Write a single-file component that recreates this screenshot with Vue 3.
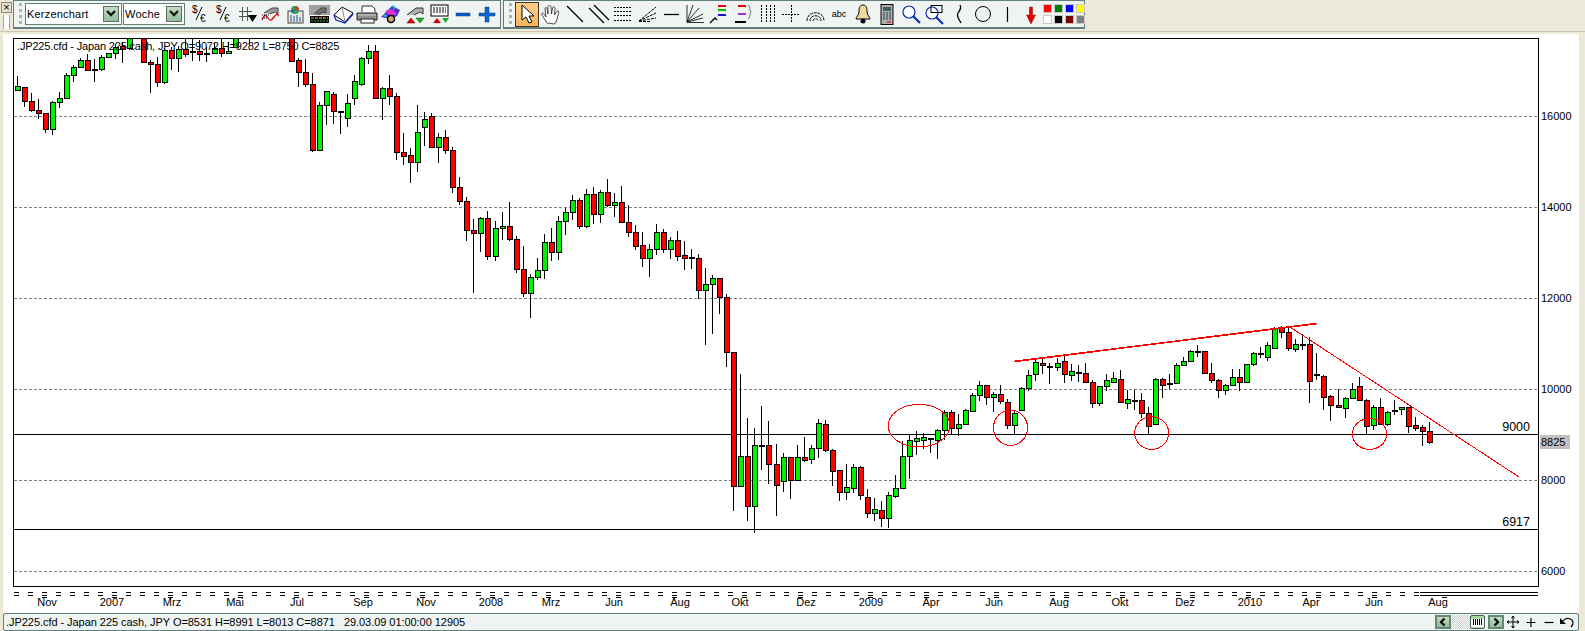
<script setup>
// --- KERZEN ---
// [Docht oben, Körper oben, Körper unten, Docht unten, Farbe] in Pixeln; null = außerhalb des Charts
const RAW = [
  [76,86,90,90,'g'],[87,87,101,107,'r'],[93,101,110,112,'r'],[99,110,113,119,'r'],[113,113,129,133,'r'],
  [101,102,129,135,'g'],[92,98,102,108,'g'],[73,75,98,99,'g'],[65,67,75,82,'g'],[58,60,67,68,'g'],
  [54,60,70,71,'r'],[59,69,69,82,'d'],[55,57,69,71,'g'],[53,53,57,58,'g'],[44,47,53,59,'g'],
  [42,46,49,63,'r'],[30,30,48,50,'g'],null,[30,30,62,63,'r'],[60,62,64,93,'r'],
  [57,64,82,87,'r'],[48,50,82,84,'g'],[47,50,58,70,'r'],[46,49,58,72,'g'],[39,49,54,57,'r'],
  [39,51,51,61,'d'],[40,51,54,61,'r'],[47,53,53,62,'d'],[43,48,53,54,'g'],[39,48,53,57,'r'],
  [42,51,53,54,'g'],[30,30,47,48,'g'],null,[30,30,30,44,'g'],null,
  null,null,null,null,[30,30,61,62,'r'],
  [58,60,72,87,'r'],[59,72,84,87,'r'],[73,84,150,152,'r'],[102,105,150,151,'g'],[91,91,105,125,'g'],
  [92,94,111,124,'r'],[111,111,111,134,'d'],[94,103,118,127,'g'],[75,81,98,105,'g'],[57,58,84,86,'g'],
  [45,51,58,64,'g'],[45,51,98,98,'r'],[87,88,98,120,'g'],[75,88,96,105,'r'],[93,96,152,160,'r'],
  [133,152,156,165,'r'],[148,155,162,183,'r'],[105,132,162,172,'g'],[112,119,127,146,'g'],[113,116,147,147,'r'],
  [133,137,147,163,'g'],[130,137,150,154,'r'],[147,150,187,193,'r'],[177,187,201,205,'r'],[197,201,230,241,'r'],
  [219,230,233,293,'r'],[217,218,233,252,'g'],[211,218,256,260,'r'],[221,228,256,261,'g'],[212,226,228,240,'g'],
  [202,226,239,241,'r'],[236,239,269,273,'r'],[246,269,293,297,'r'],[274,277,293,318,'g'],[258,270,277,280,'g'],
  [234,242,270,279,'g'],[228,242,252,261,'r'],[216,221,252,260,'g'],[208,212,221,235,'g'],[195,200,212,220,'g'],
  [198,200,226,229,'r'],[189,194,226,228,'g'],[187,194,214,224,'r'],[190,192,214,223,'g'],[179,192,205,207,'r'],
  [193,202,205,217,'g'],[186,202,222,222,'r'],[205,222,232,237,'r'],[225,232,246,250,'r'],[232,245,258,267,'r'],
  [244,249,258,277,'g'],[224,232,249,255,'g'],[229,232,249,253,'r'],[237,240,249,259,'g'],[231,240,256,261,'r'],
  [241,255,258,270,'r'],[249,257,257,269,'d'],[254,258,290,299,'r'],[268,284,290,345,'g'],[275,278,284,334,'g'],
  [278,278,297,314,'r'],[294,297,352,367,'r'],[352,352,486,511,'r'],[374,456,486,486,'g'],[418,456,506,521,'r'],
  [428,445,506,533,'g'],[406,445,445,470,'d'],[421,445,464,484,'r'],[444,464,485,516,'r'],[453,457,481,492,'g'],
  [457,457,480,499,'r'],[445,457,480,481,'g'],[437,457,460,462,'r'],[445,448,459,464,'g'],[419,423,448,458,'g'],
  [420,424,450,452,'r'],[449,450,471,486,'r'],[470,470,492,501,'r'],[464,487,492,500,'g'],[464,467,488,493,'g'],
  [466,467,495,500,'r'],[489,497,513,518,'r'],[498,509,513,521,'g'],[501,510,518,527,'r'],[492,495,518,528,'g'],
  [475,488,496,498,'g'],[441,456,488,488,'g'],[434,440,456,479,'g'],[431,438,441,455,'g'],[433,437,440,449,'g'],
  [438,438,438,453,'d'],[429,430,440,459,'g'],[410,412,430,440,'g'],[410,412,428,434,'r'],[414,424,428,436,'g'],
  [409,410,424,425,'g'],[393,395,411,411,'g'],[381,385,395,401,'g'],[385,385,397,405,'r'],[392,394,397,412,'g'],
  [385,394,401,404,'r'],[399,402,425,429,'r'],[410,413,425,434,'g'],[387,388,410,410,'g'],[370,375,388,391,'g'],
  [359,362,374,381,'g'],[359,363,365,374,'r'],[363,366,366,384,'d'],[358,363,367,371,'g'],[355,361,374,383,'r'],
  [364,371,375,381,'g'],[365,372,372,382,'d'],[363,373,382,382,'r'],[380,382,403,408,'r'],[386,386,403,406,'g'],
  [374,380,386,391,'g'],[372,378,382,383,'g'],[370,379,402,402,'r'],[390,399,403,409,'g'],[390,400,400,410,'d'],
  [393,400,413,418,'r'],[407,413,426,434,'r'],[378,379,424,425,'g'],[378,379,385,398,'r'],[374,383,383,389,'d'],
  [363,365,383,383,'g'],[357,361,365,366,'g'],[350,351,361,361,'g'],[345,351,351,357,'d'],[351,351,373,373,'r'],
  [363,373,380,383,'r'],[379,380,390,398,'r'],[384,385,390,395,'g'],[369,377,385,385,'g'],[369,377,382,391,'r'],
  [364,364,382,383,'g'],[352,353,364,366,'g'],[347,353,354,358,'d'],[342,345,357,361,'g'],[327,328,348,348,'g'],
  [326,327,332,338,'r'],[327,332,348,351,'r'],[339,344,349,352,'g'],[334,344,344,350,'d'],[337,344,381,403,'r'],
  [353,374,374,380,'d'],[375,376,397,410,'r'],[395,396,405,421,'r'],[389,405,407,408,'r'],[397,398,408,418,'g'],
  [383,389,398,398,'g'],[377,386,400,401,'r'],[399,400,426,434,'r'],[405,407,425,430,'g'],[398,407,424,425,'r'],
  [411,412,424,426,'g'],[400,410,410,415,'d'],[407,407,409,415,'g'],[407,407,426,433,'r'],[417,425,428,431,'r'],
  [425,427,431,446,'r'],[422,431,442,444,'r']
];

const FILL = { r: '#ff0000', g: '#00f000', d: '#000000' };

const bars = RAW.flatMap((c, i) => {
  if (!c) return [];
  const [hi, top, bottom, lo, kind] = c;
  return [{
    id: i,
    x: Math.floor(17.3 + 7.025 * i) + 0.5,
    hi, lo, top: top + 0.5,
    h: Math.max(bottom - top, 1),
    fill: FILL[kind]
  }];
});

// --- ACHSEN ---
const PRICES = [
  { label: '16000', y: 116 }, { label: '14000', y: 207 }, { label: '12000', y: 298 },
  { label: '10000', y: 389 }, { label: '8000', y: 480 }, { label: '6000', y: 571 }
];

const MONTHS = [
  ['Nov', 47], ['2007', 112], ['Mrz', 172], ['Mai', 235], ['Jul', 297], ['Sep', 363], ['Nov', 426], ['2008', 491],
  ['Mrz', 551], ['Jun', 614], ['Aug', 680], ['Okt', 740], ['Dez', 806], ['2009', 871], ['Apr', 931], ['Jun', 994],
  ['Aug', 1059], ['Okt', 1120], ['Dez', 1185], ['2010', 1250], ['Apr', 1311], ['Jun', 1374], ['Aug', 1438]
];

// Monatsstrich sitzt auf dem nächsten "="-Raster links vom Label
const tickStart = (x) => 14 + 14 * Math.round((x - 16) / 14);

const SWATCHES = ['#ff0000', '#008000', '#0000ff', '#ffff00', '#ffffff', '#000000', '#800000', '#808080'];
</script>

<template>
  <div class="page">
    <div class="topbar">
      <div class="dock">
        <div class="close">×</div>
        <div class="dock-grip"></div>
      </div>

      <div class="toolbar first">
        <div class="grip"></div>
        <div class="combo wide">
          <span>Kerzenchart</span>
          <div class="drop"><svg width="12" height="8" viewBox="0 0 12 8"><path d="M2 1l4 4 4-4" fill="none" stroke="#101810" stroke-width="2.4" /></svg></div>
        </div>
        <div class="combo narrow">
          <span>Woche</span>
          <div class="drop"><svg width="12" height="8" viewBox="0 0 12 8"><path d="M2 1l4 4 4-4" fill="none" stroke="#101810" stroke-width="2.4" /></svg></div>
        </div>

        <div class="icons">
          <svg class="ic" viewBox="0 0 24 24"><text x="5" y="11" class="ic-t">$</text><path d="M9 18L15 5" stroke="#000" fill="none" /><text x="13" y="20" class="ic-t">€</text></svg>
          <svg class="ic" viewBox="0 0 24 24"><text x="5" y="11" class="ic-t">$</text><path d="M9 18L15 5" stroke="#000" fill="none" /><text x="13" y="20" class="ic-t">€</text></svg>
          <svg class="ic" viewBox="0 0 24 24"><path d="M4 9.500h13M4 14.500h13M7.500 5v14M12.500 5v14" stroke="#555" fill="none" /><path d="M13 13h9l-4.500 7z" fill="#000" /></svg>
          <svg class="ic" viewBox="0 0 24 24"><path d="M5 11l8-5h6v6l-3-2-5 2" fill="#999" stroke="#444" /><path d="M3 18c3-7 4-5 6-2s3 3 6-1 3-3 5-1" fill="none" stroke="#e00000" stroke-width="1.300" /><path d="M3 13h7M3 16h5" stroke="#000" stroke-dasharray="1 1" /></svg>
          <svg class="ic" viewBox="0 0 24 24"><rect x="5" y="9" width="15" height="12" fill="#e8e8e8" stroke="#444" /><path d="M8 13v7M11 14v6M14 13v7M17 15v5" stroke="#4a70a0" stroke-width="1.200" /><circle cx="12" cy="8" r="4" fill="#2f9f4f" /><path d="M12 8V4a4 4 0 0 1 4 4z" fill="#e03030" /><path d="M12 8h-4a4 4 0 0 0 1 3z" fill="#3050d0" /></svg>
          <svg class="ic" viewBox="0 0 24 24"><rect x="2" y="3" width="21" height="10" fill="#a0a0a0" /><path d="M7 12l7-6h5v5l-3-1-5 3" fill="#707070" stroke="#444" /><rect x="3" y="14" width="19" height="7" fill="#000" /><path d="M4 16h17" stroke="#e0e000" stroke-dasharray="3 1" /><path d="M4 19h17" stroke="#30c030" stroke-dasharray="2 1" /></svg>
          <svg class="ic" viewBox="0 0 24 24"><path d="M3 13l8-8 11 6-8 9z" fill="#fff" stroke="#000" /><path d="M3 13l2 5 9 3 8-9" fill="none" stroke="#1020c0" stroke-width="1.300" /><path d="M11 5l3 15" stroke="#888" fill="none" /></svg>
          <svg class="ic" viewBox="0 0 24 24"><path d="M7 10V4h10l3 3v3" fill="#fff" stroke="#333" /><path d="M2 11h20v7H2z" fill="#909090" stroke="#222" /><path d="M3 13h18" stroke="#d0d0d0" /><rect x="6" y="17" width="13" height="4" fill="#fff" stroke="#222" /></svg>
          <svg class="ic" viewBox="0 0 24 24"><path d="M2 15l6-6 5-5 8 4-3 6-5 3-6-1z" fill="#5030d0" /><path d="M6 9l7-2 5 5-7 2z" fill="#e030d0" /><path d="M13 3l4 2-2 3zM3 14l4-2 1 3z" fill="#20c0e0" /><circle cx="12" cy="17" r="3.500" fill="#c8b060" stroke="#000" stroke-width="1.500" /></svg>
          <svg class="ic" viewBox="0 0 24 24"><path d="M4 13l9-7h7v6l-3-2-6 3" fill="#b0b0b0" stroke="#333" /><path d="M4 21l4-5 4 5z" fill="#e00000" stroke="#500" stroke-width=".5" /><path d="M13 16h8l-4 5z" fill="#20b020" stroke="#050" stroke-width=".5" /></svg>
          <svg class="ic" viewBox="0 0 24 24"><rect x="4" y="3" width="17" height="11" fill="#fff" stroke="#000" /><path d="M6 6h13M6 8h13M6 10h13" stroke="#000" stroke-dasharray="2 1" /><path d="M6 21l4-5 4 5z" fill="#e00000" /><path d="M15 16h7l-3.500 5z" fill="#20b020" /></svg>
          <svg class="ic" viewBox="0 0 24 24"><rect x="5" y="11" width="14" height="3" fill="#0a5cc4" stroke="#063a80" stroke-width=".5" /></svg>
          <svg class="ic" viewBox="0 0 24 24"><path d="M10 5h4v6h6v3h-6v6h-4v-6H4v-3h6z" fill="#0a6ad0" stroke="#063a80" stroke-width=".5" /></svg>
        </div>
      </div>

      <div class="toolbar second">
        <div class="grip"></div>
        <div class="selected">
          <svg width="22" height="24" viewBox="0 0 22 24"><path d="M6 3v15l4-3 3 6 3-1-3-6h5z" fill="#fff" stroke="#000" /></svg>
        </div>
        <div class="icons">
          <svg class="ic" viewBox="0 0 24 24"><path d="M8 21l-5-8c-1-2 1-3 2-1l2 3-1-8c0-2 2-2 2 0l1 5V5c0-2 3-2 3 0l.5 7 1-6c.5-2 3-1 2.500 1l-.5 6 2-3c1-2 3-1 2 1l-2 8-2 3z" fill="#fff" stroke="#222" stroke-width=".8" /></svg>
          <svg class="ic" viewBox="0 0 24 24"><path d="M4 4l16 16" stroke="#000" stroke-width="1.300" /></svg>
          <svg class="ic" viewBox="0 0 24 24"><path d="M2 6l15 15M7 3l15 15" stroke="#000" stroke-width="1.300" /></svg>
          <svg class="ic" viewBox="0 0 24 24"><path d="M3 5.500h18M3 9.500h18M3 13.500h18M3 18.500h18" stroke="#000" stroke-dasharray="2 1" /></svg>
          <svg class="ic" viewBox="0 0 24 24"><path d="M4 19L21 5M4 19L21 11M4 19L21 16M4 19.500h11" stroke="#000" stroke-dasharray="3 1" /></svg>
          <svg class="ic" viewBox="0 0 24 24"><path d="M5 12.500h15" stroke="#000" stroke-width="1.300" /></svg>
          <svg class="ic" viewBox="0 0 24 24"><path d="M4 20V3M4 20L10 3M4 20L16 6M4 20L20 12M4 20L20 16M4 20.500h17" stroke="#000" stroke-width=".8" /></svg>
          <svg class="ic" viewBox="0 0 24 24"><path d="M3 21l5-5 2 2" fill="none" stroke="#000" stroke-width="1.300" /><path d="M11 4h8" stroke="#f00000" stroke-width="2" /><path d="M11 8h8" stroke="#00c000" stroke-width="2" /><path d="M11 13h8" stroke="#1010e0" stroke-width="2" /></svg>
          <svg class="ic" viewBox="0 0 24 24"><path d="M7 4h8" stroke="#f00000" stroke-width="2" /><path d="M7 12h8" stroke="#a030e0" stroke-width="2" /><path d="M4 20h11" stroke="#000" stroke-width="2" /><path d="M17 3c2 1 2 3 2 5l1 2-1 2c0 2 0 4-2 5" fill="none" stroke="#777" /></svg>
          <svg class="ic" viewBox="0 0 24 24"><path d="M6.500 3v18M11.500 3v18M15.500 3v18M19.500 3v18" stroke="#000" stroke-dasharray="2 1" /></svg>
          <svg class="ic" viewBox="0 0 24 24"><path d="M3 12.500h18M12.500 3v18" stroke="#000" stroke-dasharray="2 1" /></svg>
          <svg class="ic" viewBox="0 0 24 24"><path d="M4 19c0-11 17-11 17 0M7 19c0-7 11-7 11 0M10 19c0-3 5-3 5 0" fill="none" stroke="#000" stroke-dasharray="3 .8" /></svg>
          <svg class="ic" viewBox="0 0 24 24"><text x="12" y="15" text-anchor="middle" class="ic-abc">abc</text></svg>
          <svg class="ic" viewBox="0 0 24 24"><path d="M12 3c-4 0-4 4-4 7s-3 5-3 7h14c0-2-3-4-3-7s0-7-4-7z" fill="#f3d8a0" stroke="#000" /><circle cx="12" cy="19" r="2.500" fill="#000" /></svg>
          <svg class="ic" viewBox="0 0 24 24"><rect x="6" y="2.500" width="12" height="20" fill="#b0b0b0" stroke="#000" /><rect x="8" y="5" width="8" height="4" fill="#406060" /><path d="M8 11h8M8 13h8M8 15h8M8 17h8" stroke="#204040" stroke-dasharray="2 1" /><path d="M12 20h4" stroke="#e00000" /></svg>
          <svg class="ic" viewBox="0 0 24 24"><circle cx="10" cy="10" r="6" fill="#fff" stroke="#1030b0" stroke-width="1.200" /><path d="M14 14l7 7" stroke="#1030b0" stroke-width="2.200" /></svg>
          <svg class="ic" viewBox="0 0 24 24"><circle cx="9" cy="11" r="6" fill="#fff" stroke="#1030b0" stroke-width="1.200" /><rect x="8" y="3.500" width="11" height="7" fill="none" stroke="#000" /><path d="M13 15l7 7" stroke="#1030b0" stroke-width="2.200" /></svg>
          <svg class="ic" viewBox="0 0 24 24"><path d="M13 3c2 3 0 5-2 8s1 6 3 10" fill="none" stroke="#000" stroke-width="1.300" /></svg>
          <svg class="ic" viewBox="0 0 24 24"><circle cx="12" cy="12" r="7.500" fill="none" stroke="#000" /></svg>
          <svg class="ic" viewBox="0 0 24 24"><path d="M12.500 5v15" stroke="#000" stroke-width="1.200" /></svg>
          <svg class="ic" viewBox="0 0 24 24"><path d="M10.500 5h3v8h3L12 22l-4.500-9h3z" fill="#e80000" stroke="#900" stroke-width=".5" /></svg>
        </div>
        <div class="palette">
          <span v-for="c in SWATCHES" :key="c" class="swatch" :style="{ background: c }"></span>
        </div>
      </div>
    </div>

    <div class="chart-wrap">
      <svg class="chart" width="1576" height="579" viewBox="3 34 1576 579">
        <defs>
          <clipPath id="plot"><rect x="14" y="39" width="1524" height="547" /></clipPath>
        </defs>

        <!-- Raster -->
        <line v-for="p in PRICES" :key="p.label" x1="14" x2="1538" :y1="p.y + 0.5" :y2="p.y + 0.5" class="grid" />
        <line x1="14" x2="1538" y1="434.5" y2="434.5" class="level" />
        <line x1="14" x2="1538" y1="529.5" y2="529.5" class="level" />

        <g clip-path="url(#plot)" class="crisp">
          <g v-for="b in bars" :key="b.id">
            <line :x1="b.x" :x2="b.x" :y1="b.hi" :y2="b.lo" class="wick" />
            <rect :x="b.x - 2" :y="b.top" width="5" :height="b.h" :fill="b.fill" class="body" />
          </g>
        </g>

        <text x="17" y="50" class="lbl head">.JP225.cfd - Japan 225 cash, JPY O=9072 H=9282 L=8750 C=8825</text>

        <!-- Handgezeichnete Linien -->
        <g class="drawing">
          <line x1="1014" y1="361.500" x2="1317" y2="323.500" stroke-width="1.700" />
          <line x1="1290" y1="327" x2="1519" y2="477" />
          <ellipse cx="919" cy="425.700" rx="30.800" ry="21.300" />
          <ellipse cx="1010.500" cy="427.700" rx="17" ry="17.700" />
          <ellipse cx="1151.700" cy="433" rx="17" ry="16.300" />
          <ellipse cx="1369.500" cy="434" rx="17.200" ry="15.300" />
        </g>

        <text x="1530" y="430.500" text-anchor="end" class="note">9000</text>
        <text x="1530" y="525.500" text-anchor="end" class="note">6917</text>

        <!-- Rahmen -->
        <rect x="13.500" y="38.500" width="1525" height="548" class="frame" />

        <!-- Preisachse -->
        <text v-for="p in PRICES" :key="'t' + p.label" x="1541" :y="p.y + 4" class="lbl">{{ p.label }}</text>
        <rect x="1540" y="435" width="30" height="14" fill="#c0c0c0" />
        <text x="1541" y="446" class="lbl">8825</text>

        <!-- Zeitachse -->
        <line x1="14" x2="1420" y1="592.500" y2="592.500" class="tick" />
        <line x1="14" x2="1420" y1="595.500" y2="595.500" class="tick" />
        <line x1="1420" x2="1538" y1="592.500" y2="592.500" class="tick-end" />
        <line x1="1420" x2="1538" y1="595.500" y2="595.500" class="tick-end" />
        <line v-for="m in MONTHS" :key="'m' + m[1]" :x1="tickStart(m[1])" :x2="tickStart(m[1]) + 5" y1="597.500" y2="597.500" class="tick-end" />
        <text v-for="m in MONTHS" :key="m[1]" :x="m[1]" y="606" text-anchor="middle" class="lbl">{{ m[0] }}</text>
      </svg>
    </div>

    <div class="statusbar">
      <span class="status-text">.JP225.cfd - Japan 225 cash, JPY O=8531 H=8991 L=8013 C=8871 &nbsp; 29.03.09 01:00:00 12905</span>
      <div class="status-right">
        <div class="nav"><svg width="10" height="10" viewBox="0 0 10 10"><path d="M6.500 1.500L3 5l3.500 3.500" fill="none" stroke="#000" stroke-width="2.200" /></svg></div>
        <div class="dither"></div>
        <div class="thumb"><span></span></div>
        <div class="nav"><svg width="10" height="10" viewBox="0 0 10 10"><path d="M3.500 1.500L7 5 3.500 8.500" fill="none" stroke="#000" stroke-width="2.200" /></svg></div>
        <svg class="mini" viewBox="0 0 18 14"><path d="M9 1v12M3 7h12M7.500 3L9 1l1.500 2M7.500 11L9 13l1.500-2M5 5.500L3 7l2 1.500M13 5.500L15 7l-2 1.500" fill="none" stroke="#000" /></svg>
        <svg class="mini" viewBox="0 0 18 14"><path d="M9 3v9M4.500 7.500h9" stroke="#000" stroke-width="1.200" /></svg>
        <svg class="mini" viewBox="0 0 18 14"><path d="M4.500 7.500h9" stroke="#000" stroke-width="1.200" /></svg>
        <svg class="mini" viewBox="0 0 18 14"><path d="M2 3v6h6z" fill="#000" /><path d="M5 6c3-4 9-3 10 1 .5 2-1 4-2 5" fill="none" stroke="#000" stroke-width="1.200" /></svg>
      </div>
    </div>
  </div>
</template>

<style scoped>
.page {
  width: 1585px;
  height: 631px;
  background: #ece9d8;
  display: flex;
  flex-direction: column;
  overflow: hidden;
  font-family: "Liberation Sans", Arial, sans-serif;
  color: #000;
}

/* TOOLBARS */
.topbar {
  display: flex;
  height: 29px;
  flex-shrink: 0;
  box-shadow: 0 2px 0 #ece9d8, 0 3px 0 #c9c5b2;
}

.dock {
  width: 13px;
  flex-shrink: 0;
  display: flex;
  flex-direction: column;
  align-items: center;
}

.close {
  width: 9px;
  height: 9px;
  margin-top: 2px;
  border: 1px solid #8a8a80;
  background: #e4e1d0;
  font-size: 11px;
  line-height: 8px;
  text-align: center;
}

.dock-grip {
  width: 5px;
  height: 14px;
  margin-top: 2px;
  border-left: 1px solid #a8a594;
  border-right: 1px solid #a8a594;
  background: #fff;
}

.toolbar {
  display: flex;
  align-items: center;
  background: #eff4f3;
  border: 1px solid #61807e;
  border-width: 1px 1px 2px 1px;
  box-sizing: border-box;
}

.toolbar.first {
  width: 488px;
}

.toolbar.second {
  width: 582px;
  margin-left: 2px;
}

.grip {
  width: 7px;
  height: 22px;
  margin: 0 2px 0 2px;
  flex-shrink: 0;
  background: conic-gradient(#a9b4b2 25%, transparent 0) 0 0 / 6px 6px;
}

.combo {
  display: flex;
  align-items: center;
  justify-content: space-between;
  height: 22px;
  box-sizing: border-box;
  border: 1px solid #5f7f78;
  background: #fff;
  padding: 0 2px 0 1px;
  font-size: 11px;
  letter-spacing: 0.2px;
}

.combo.wide {
  width: 97px;
}

.combo.narrow {
  width: 62px;
  margin-left: 1px;
}

.drop {
  width: 16px;
  height: 16px;
  box-sizing: border-box;
  border: 1px solid #53735f;
  background: linear-gradient(#c4dcc4, #97b99b);
  display: flex;
  align-items: center;
  justify-content: center;
}

.icons {
  display: flex;
  align-items: center;
}

.first .icons {
  margin-left: 2px;
}

.ic {
  width: 24px;
  height: 24px;
  flex-shrink: 0;
}

.ic-t {
  font-size: 10px;
  font-family: "Liberation Sans", Arial, sans-serif;
}

.ic-abc {
  font-size: 9px;
  font-family: "Liberation Sans", Arial, sans-serif;
}

.selected {
  width: 24px;
  height: 25px;
  box-sizing: border-box;
  border: 1px solid #40382c;
  background: linear-gradient(#fbd08c, #f6b45c);
  display: flex;
  align-items: center;
  justify-content: center;
  flex-shrink: 0;
}

.palette {
  display: grid;
  grid-template-columns: repeat(4, 9px);
  grid-auto-rows: 9px;
  gap: 2px;
}

.swatch {
  border: 1px solid #c8c8c8;
  box-sizing: border-box;
}

/* CHART */
.chart-wrap {
  flex: 1;
  margin: 5px 6px 0 3px;
  background: #fff;
  min-height: 0;
}

.chart {
  display: block;
}

.grid {
  stroke: #808080;
  stroke-dasharray: 3 2;
  shape-rendering: crispEdges;
}

.level {
  stroke: #000;
  shape-rendering: crispEdges;
}

.crisp {
  shape-rendering: crispEdges;
}

.wick {
  stroke: #000;
}

.body {
  stroke: #000;
}

.drawing line,
.drawing ellipse {
  fill: none;
  stroke: #ff0000;
  shape-rendering: crispEdges;
}

.frame {
  fill: none;
  stroke: #000;
  shape-rendering: crispEdges;
}

.lbl {
  font-size: 11px;
  font-family: "Liberation Sans", Arial, sans-serif;
}

.head {
  letter-spacing: -0.16px;
}

.note {
  font-size: 12.5px;
  font-family: "Liberation Sans", Arial, sans-serif;
}

.tick {
  stroke: #000;
  stroke-dasharray: 5 9;
  shape-rendering: crispEdges;
}

.tick-end {
  stroke: #000;
  shape-rendering: crispEdges;
}

/* STATUS */
.statusbar {
  height: 18px;
  flex-shrink: 0;
  margin: 0 6px 0 3px;
  box-sizing: border-box;
  background: #eff4f3;
  border: 1px solid #61807e;
  border-radius: 2px;
  display: flex;
  align-items: center;
  justify-content: space-between;
  padding: 0 2px 0 2px;
  font-size: 11px;
  white-space: nowrap;
}

.status-text {
  letter-spacing: -0.05px;
}

.status-right {
  display: flex;
  align-items: center;
}

.nav {
  width: 16px;
  height: 14px;
  box-sizing: border-box;
  border: 2px solid #5f8a70;
  background: linear-gradient(#c4dcc4, #97b99b);
  display: flex;
  align-items: center;
  justify-content: center;
}

.dither {
  width: 19px;
  height: 14px;
  background: repeating-conic-gradient(#c8cccc 0 25%, #fff 0 50%) 0 0 / 2px 2px;
}

.thumb {
  width: 15px;
  height: 14px;
  margin-right: 3px;
  box-sizing: border-box;
  border: 1px solid #3f5f50;
  border-radius: 2px;
  background: linear-gradient(#a8d8a8 0 3px, #fff 3px, #fff 11px, #a8d8a8 11px);
  display: flex;
  align-items: center;
  justify-content: center;
}

.thumb span {
  width: 9px;
  height: 6px;
  background: repeating-linear-gradient(90deg, #000 0 1px, transparent 1px 2px);
}

.mini {
  width: 18px;
  height: 14px;
  flex-shrink: 0;
}
</style>
